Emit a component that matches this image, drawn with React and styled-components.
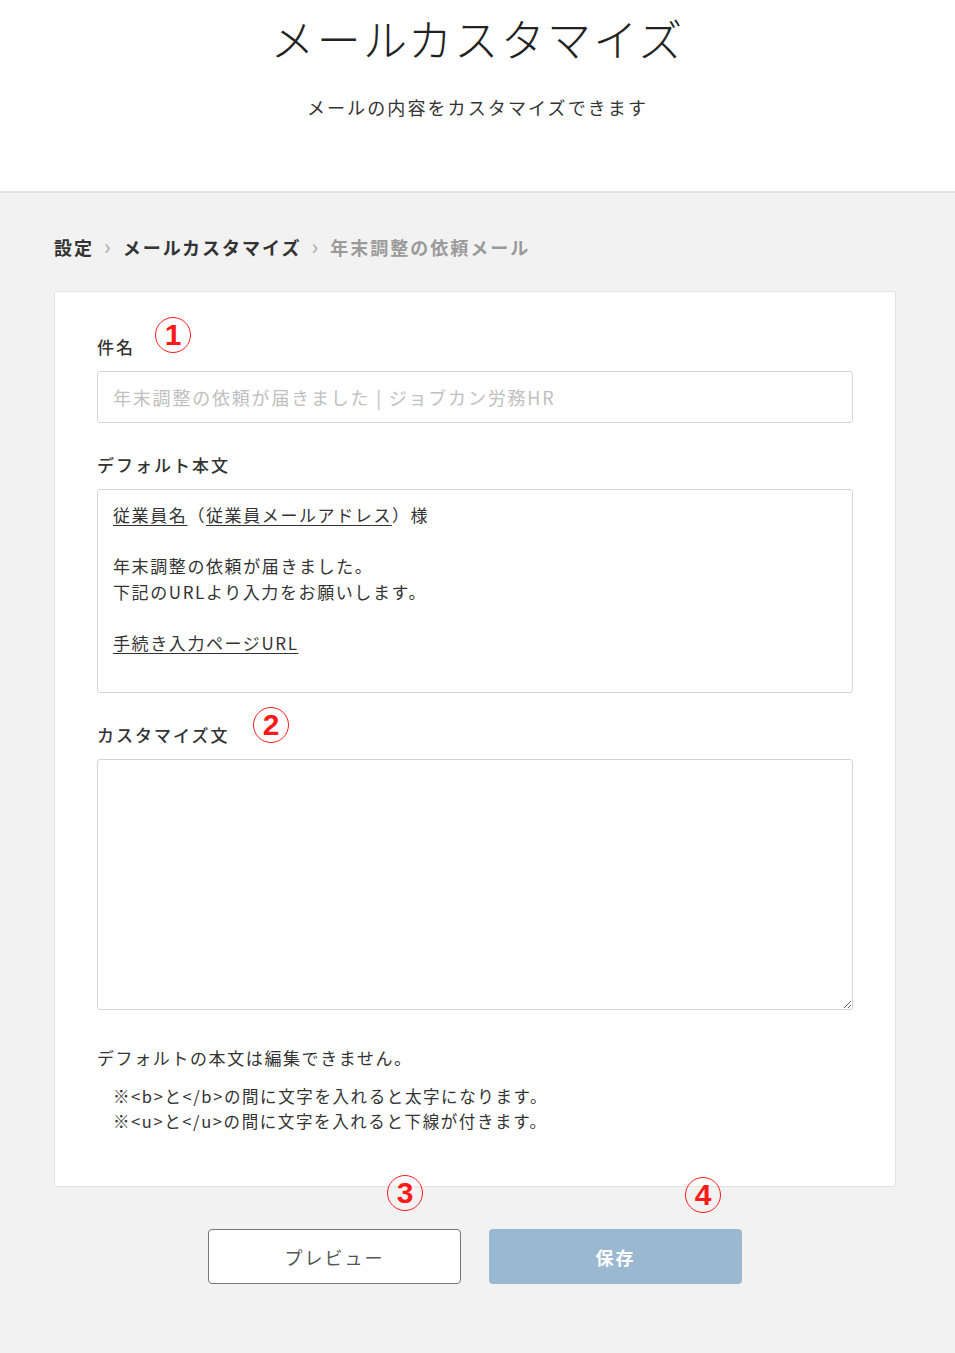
import React from 'react';
import styled, { createGlobalStyle } from 'styled-components';

const GlobalStyle = createGlobalStyle`
  html, body {
    margin: 0;
    padding: 0;
    background: #f2f2f2;
  }
  body {
    font-family: "Noto Sans CJK JP", "Noto Sans", sans-serif;
    color: #333;
  }
`;

const Page = styled.div`
  width: 955px;
  min-height: 1353px;
  background: #f2f2f2;
`;

const Header = styled.header`
  background: #fff;
  height: 193px;
  border-bottom: 2px solid #e4e4e4;
  display: flex;
  flex-direction: column;
  align-items: center;
  box-sizing: border-box;
  padding-top: 6px;
`;

const Title = styled.h1`
  margin: 0;
  font-size: 44px;
  font-weight: 300;
  letter-spacing: 2.3px;
  line-height: 64px;
  color: #222;
`;

const Subtitle = styled.p`
  margin: 24px 0 0;
  font-size: 18px;
  letter-spacing: 2.1px;
  color: #333;
`;

const Main = styled.main`
  padding: 30px 0 0 54px;
`;

const Breadcrumb = styled.nav`
  display: flex;
  align-items: center;
  gap: 10px;
  height: 48px;
  font-size: 18px;
  font-weight: 700;
  letter-spacing: 2px;
`;

const Crumb = styled.span`
  color: ${(p) => (p.$current ? '#9a9a9a' : '#333')};
`;

const Sep = styled.span`
  color: #aaa;
  font-weight: 400;
  font-size: 22px;
  line-height: 1;
  margin-top: -4px;
`;

const Card = styled.section`
  margin-top: 20px;
  width: 842px;
  box-sizing: border-box;
  background: #fff;
  border: 1px solid #e2e2e2;
  border-radius: 2px;
  padding: 37px 42px 52px 42px;
`;

const LabelRow = styled.div`
  position: relative;
  height: 42px;
  display: flex;
  align-items: flex-end;
  padding-bottom: 12px;
  box-sizing: border-box;
`;

const Label = styled.label`
  font-size: 17px;
  font-weight: 500;
  letter-spacing: 2px;
  color: #333;
`;

const Marker = styled.span`
  position: absolute;
  left: ${(p) => p.$left}px;
  top: ${(p) => p.$top}px;
  width: 34px;
  height: 34px;
  border: 1.5px solid #ff1a1a;
  border-radius: 50%;
  display: flex;
  align-items: center;
  justify-content: center;
  color: #ff1a1a;
  font-family: "Liberation Sans", Arial, sans-serif;
  font-weight: 700;
  font-size: 30px;
  line-height: 1;
`;

const Input = styled.input`
  display: block;
  width: 100%;
  height: 52px;
  box-sizing: border-box;
  border: 1.5px solid #d4d4d4;
  border-radius: 3px;
  padding: 0 15px;
  font-family: inherit;
  font-size: 18px;
  letter-spacing: 1.8px;
  color: #333;
  &::placeholder {
    color: #c0c0c0;
  }
`;

const Field = styled.div`
  margin-top: ${(p) => p.$mt || 0}px;
`;

const DefaultBody = styled.div`
  height: 204px;
  box-sizing: border-box;
  border: 1.5px solid #d4d4d4;
  border-radius: 3px;
  padding: 12px 15px;
  font-size: 17px;
  line-height: 25.5px;
  letter-spacing: 1.6px;
  color: #333;
`;

const Line = styled.div`
  min-height: 25.5px;
`;

const U = styled.span`
  text-decoration: underline;
  text-underline-offset: 3px;
`;

const TextArea = styled.textarea`
  display: block;
  width: 100%;
  height: 251px;
  box-sizing: border-box;
  border: 1.5px solid #d4d4d4;
  border-radius: 3px;
  font-family: inherit;
  font-size: 17px;
  padding: 12px 15px;
  resize: vertical;
`;

const Note = styled.p`
  margin: 35px 0 0;
  font-size: 17px;
  letter-spacing: 1.6px;
  color: #333;
`;

const Hints = styled.div`
  margin-top: 14px;
  padding-left: 16px;
  font-size: 16.5px;
  line-height: 25px;
  letter-spacing: 1.6px;
  color: #333;
`;

const Actions = styled.div`
  position: relative;
  width: 842px;
  display: flex;
  justify-content: center;
  gap: 28px;
  padding-top: 42px;
  box-sizing: border-box;
`;

const Button = styled.button`
  width: 253px;
  height: 55px;
  box-sizing: border-box;
  border-radius: 4px;
  font-family: inherit;
  font-size: 18px;
  letter-spacing: 2px;
  cursor: pointer;
  border: ${(p) => (p.$primary ? 'none' : '1.5px solid #777')};
  background: ${(p) => (p.$primary ? '#9ab8d0' : '#fff')};
  color: ${(p) => (p.$primary ? '#fff' : '#555')};
  font-weight: ${(p) => (p.$primary ? 700 : 400)};
`;

export default function App() {
  return (
    <Page>
      <GlobalStyle />
      <Header>
        <Title>メールカスタマイズ</Title>
        <Subtitle>メールの内容をカスタマイズできます</Subtitle>
      </Header>
      <Main>
        <Breadcrumb>
          <Crumb>設定</Crumb>
          <Sep>›</Sep>
          <Crumb>メールカスタマイズ</Crumb>
          <Sep>›</Sep>
          <Crumb $current>年末調整の依頼メール</Crumb>
        </Breadcrumb>
        <Card>
          <LabelRow>
            <Label>件名</Label>
            <Marker $left={58} $top={-12}>1</Marker>
          </LabelRow>
          <Input placeholder="年末調整の依頼が届きました | ジョブカン労務HR" />

          <Field $mt={24}>
            <LabelRow>
              <Label>デフォルト本文</Label>
            </LabelRow>
            <DefaultBody>
              <Line>
                <U>従業員名</U>（<U>従業員メールアドレス</U>）様
              </Line>
              <Line />
              <Line>年末調整の依頼が届きました。</Line>
              <Line>下記のURLより入力をお願いします。</Line>
              <Line />
              <Line>
                <U>手続き入力ページURL</U>
              </Line>
            </DefaultBody>
          </Field>

          <Field $mt={24}>
            <LabelRow>
              <Label>カスタマイズ文</Label>
              <Marker $left={156} $top={-10}>2</Marker>
            </LabelRow>
            <TextArea />
          </Field>

          <Note>デフォルトの本文は編集できません。</Note>
          <Hints>
            <div>※&lt;b&gt;と&lt;/b&gt;の間に文字を入れると太字になります。</div>
            <div>※&lt;u&gt;と&lt;/u&gt;の間に文字を入れると下線が付きます。</div>
          </Hints>
        </Card>
        <Actions>
          <Marker $left={333} $top={-12}>3</Marker>
          <Marker $left={631} $top={-10}>4</Marker>
          <Button>プレビュー</Button>
          <Button $primary>保存</Button>
        </Actions>
      </Main>
    </Page>
  );
}
